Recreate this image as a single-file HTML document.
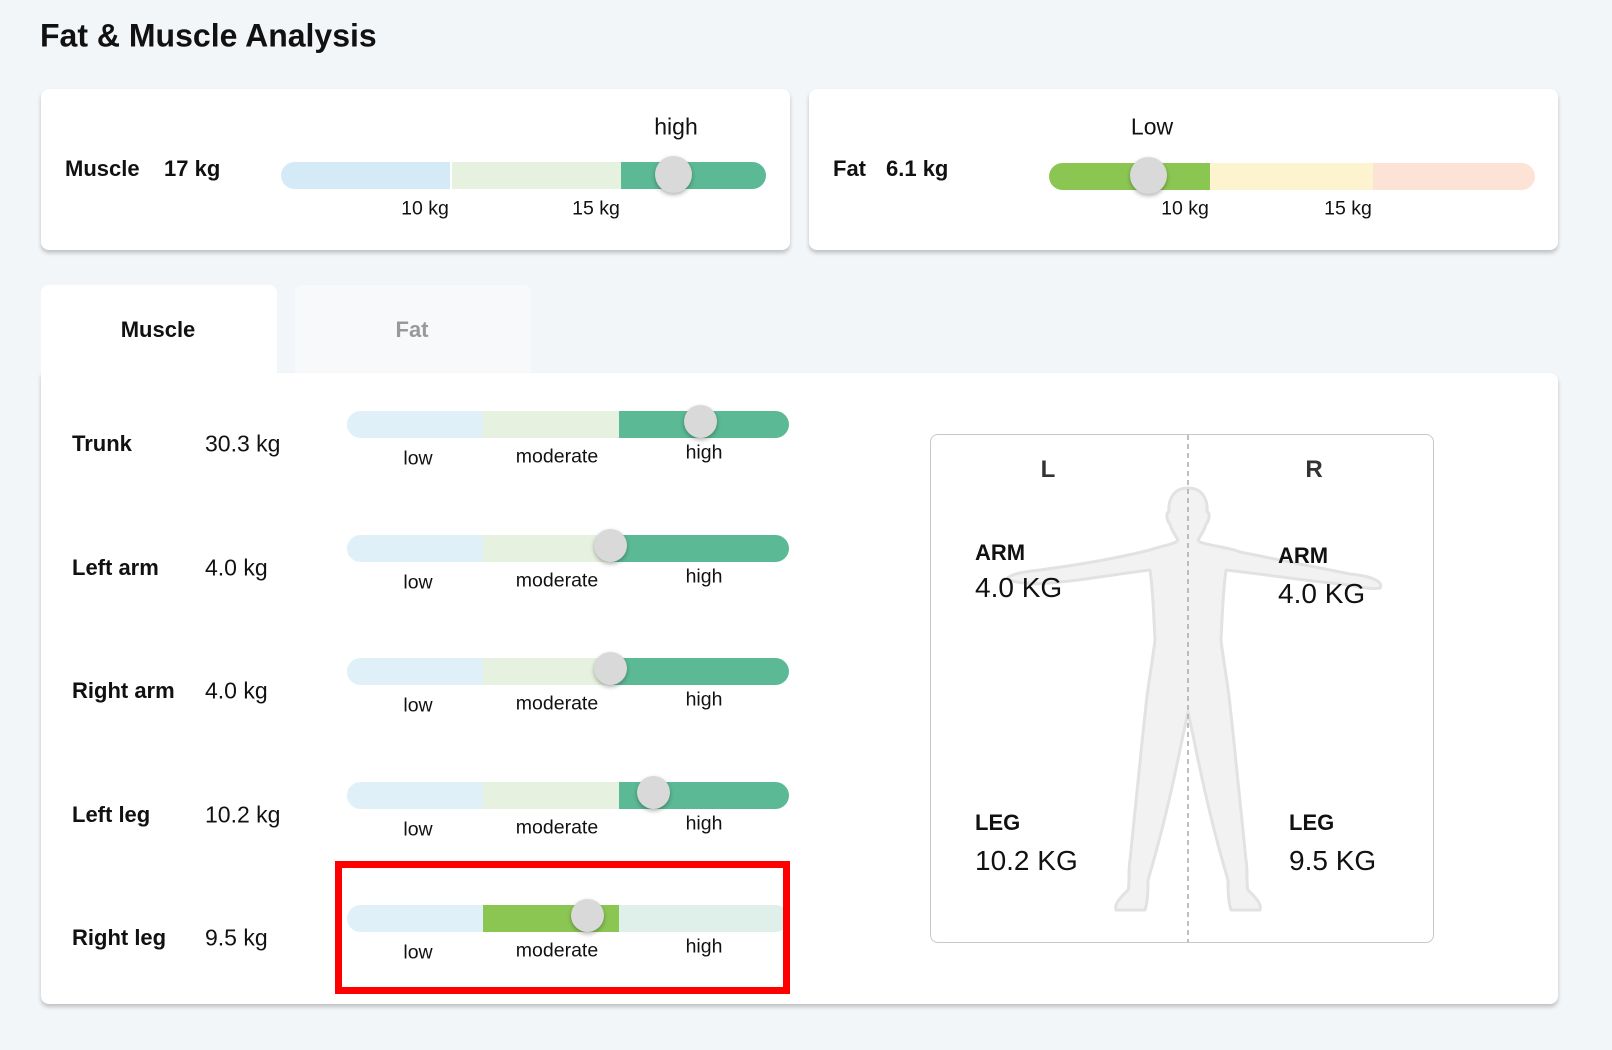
<!DOCTYPE html>
<html><head><meta charset="utf-8"><style>
*{margin:0;padding:0;box-sizing:border-box}
body{width:1612px;height:1050px;background:#f3f6f9;font-family:"Liberation Sans",Arial,sans-serif;color:#111;position:relative;overflow:hidden}
.a{position:absolute}
.card{position:absolute;background:#fff;border-radius:8px;box-shadow:0 3px 4px rgba(0,0,0,.22)}
.b{font-weight:bold}
.bar{position:absolute;height:27px;border-radius:14px;overflow:hidden;display:flex}
.bar div{height:100%}
.th{position:absolute;width:33px;height:33px;border-radius:50%;background:#d9d9d9;box-shadow:0 2px 4px rgba(0,0,0,.3)}
.lbl{position:absolute;font-size:19.5px;transform:translate(-50%,-50%);white-space:nowrap}
.t{position:absolute;transform:translateY(-50%);white-space:nowrap}
.v{font-size:23px}
</style></head><body>
<div class="t b" style="left:40px;top:36px;font-size:32px">Fat &amp; Muscle Analysis</div>

<div class="card" style="left:41px;top:89px;width:749px;height:161px"></div>
<div class="t b" style="left:65px;top:169px;font-size:22px">Muscle</div>
<div class="t b" style="left:164px;top:169px;font-size:22px">17 kg</div>
<div class="lbl" style="left:676px;top:127px;font-size:23px">high</div>
<div class="bar" style="left:281px;top:162px;width:485px"><div style="width:169px;background:#d4eaf7"></div><div style="width:2px;background:#fff"></div><div style="width:169px;background:#e6f2df"></div><div style="flex:1;background:#5bb995"></div></div>
<div class="th" style="left:655px;top:156px;width:37px;height:37px"></div>
<div class="lbl" style="left:425px;top:209px">10 kg</div>
<div class="lbl" style="left:596px;top:209px">15 kg</div>

<div class="card" style="left:809px;top:89px;width:749px;height:161px"></div>
<div class="t b" style="left:833px;top:169px;font-size:22px">Fat</div>
<div class="t b" style="left:886px;top:169px;font-size:22px">6.1 kg</div>
<div class="lbl" style="left:1152px;top:127px;font-size:23px">Low</div>
<div class="bar" style="left:1049px;top:163px;width:486px"><div style="width:161px;background:#8bc653"></div><div style="width:163px;background:#fdf3cf"></div><div style="flex:1;background:#fde3d5"></div></div>
<div class="th" style="left:1130px;top:157px;width:37px;height:37px"></div>
<div class="lbl" style="left:1185px;top:209px">10 kg</div>
<div class="lbl" style="left:1348px;top:209px">15 kg</div>

<div class="a" style="left:41px;top:285px;width:236px;height:95px;background:#fff;border-radius:8px 8px 0 0"></div>
<div class="a" style="left:295px;top:285px;width:236px;height:90px;background:#f8f9fb;border-radius:8px 8px 0 0"></div>
<div class="lbl b" style="left:158px;top:330px;font-size:22px">Muscle</div>
<div class="lbl b" style="left:412px;top:330px;font-size:22px;color:#999">Fat</div>
<div class="card" style="left:41px;top:373px;width:1517px;height:631px;border-radius:0 8px 8px 8px"></div>
<div class="a" style="left:41px;top:370px;width:236px;height:10px;background:#fff"></div>

<div class="t b" style="left:72px;top:444px;font-size:22px">Trunk</div><div class="t v" style="left:205px;top:444px">30.3 kg</div>
<div class="t b" style="left:72px;top:568px;font-size:22px">Left arm</div><div class="t v" style="left:205px;top:568px">4.0 kg</div>
<div class="t b" style="left:72px;top:691px;font-size:22px">Right arm</div><div class="t v" style="left:205px;top:691px">4.0 kg</div>
<div class="t b" style="left:72px;top:815px;font-size:22px">Left leg</div><div class="t v" style="left:205px;top:815px">10.2 kg</div>
<div class="t b" style="left:72px;top:938px;font-size:22px">Right leg</div><div class="t v" style="left:205px;top:938px">9.5 kg</div>

<div class="bar" style="left:347px;top:411px;width:442px"><div style="width:136px;background:#e0f0f8"></div><div style="width:136px;background:#e6f2df"></div><div style="flex:1;background:#5bb995"></div></div>
<div class="th" style="left:684px;top:405px"></div>
<div class="lbl" style="left:418px;top:459px">low</div><div class="lbl" style="left:557px;top:457px">moderate</div><div class="lbl" style="left:704px;top:453px">high</div>

<div class="bar" style="left:347px;top:535px;width:442px"><div style="width:136px;background:#e0f0f8"></div><div style="width:128px;background:#e6f2df"></div><div style="flex:1;background:#5bb995"></div></div>
<div class="th" style="left:594px;top:529px"></div>
<div class="lbl" style="left:418px;top:583px">low</div><div class="lbl" style="left:557px;top:581px">moderate</div><div class="lbl" style="left:704px;top:577px">high</div>

<div class="bar" style="left:347px;top:658px;width:442px"><div style="width:136px;background:#e0f0f8"></div><div style="width:128px;background:#e6f2df"></div><div style="flex:1;background:#5bb995"></div></div>
<div class="th" style="left:594px;top:652px"></div>
<div class="lbl" style="left:418px;top:706px">low</div><div class="lbl" style="left:557px;top:704px">moderate</div><div class="lbl" style="left:704px;top:700px">high</div>

<div class="bar" style="left:347px;top:782px;width:442px"><div style="width:136px;background:#e0f0f8"></div><div style="width:136px;background:#e6f2df"></div><div style="flex:1;background:#5bb995"></div></div>
<div class="th" style="left:637px;top:776px"></div>
<div class="lbl" style="left:418px;top:830px">low</div><div class="lbl" style="left:557px;top:828px">moderate</div><div class="lbl" style="left:704px;top:824px">high</div>

<div class="bar" style="left:347px;top:905px;width:442px"><div style="width:136px;background:#e0f0f8"></div><div style="width:136px;background:#8bc653"></div><div style="flex:1;background:#dff0ea"></div></div>
<div class="th" style="left:571px;top:899px"></div>
<div class="lbl" style="left:418px;top:953px">low</div><div class="lbl" style="left:557px;top:951px">moderate</div><div class="lbl" style="left:704px;top:947px">high</div>
<div class="a" style="left:335px;top:861px;width:455px;height:133px;border:7px solid #f00"></div>

<div class="a" style="left:930px;top:434px;width:504px;height:509px;border:1px solid #c8c8c8;border-radius:8px;background:#fff"></div>
<svg class="a" style="left:0;top:0" width="1612" height="1050" viewBox="0 0 1612 1050">
<g fill="#f2f2f2" stroke="#e2e2e2" stroke-width="3" stroke-linejoin="round">
<path d="M1188 488 C1172 488 1168 502 1169 512 C1166 512 1166 520 1170 524 C1172 532 1176 536 1178 540 L1176 542 C1168 546 1160 546 1150 550 C1110 560 1070 566 1040 570 C1020 572 1010 575 1008 578 C1010 582 1022 583 1036 584 C1075 582 1115 574 1150 570 C1153 590 1154 620 1155 640 C1152 665 1148 685 1146 705 C1140 760 1134 820 1130 860 C1128 872 1130 885 1128 890 C1120 898 1114 904 1116 910 L1145 910 C1148 900 1148 890 1148 880 C1160 840 1172 790 1182 740 L1188 712 L1194 740 C1204 790 1216 840 1228 880 C1228 890 1228 900 1231 910 L1260 910 C1262 904 1256 898 1248 890 C1246 885 1248 872 1246 860 C1242 820 1236 760 1230 705 C1228 685 1224 665 1221 640 C1222 620 1223 590 1226 570 C1262 574 1300 580 1340 584 C1354 585 1366 590 1380 588 C1384 582 1372 576 1350 574 C1320 568 1290 562 1240 552 C1228 547 1210 546 1200 542 L1198 540 C1200 536 1204 532 1206 524 C1210 520 1210 512 1207 512 C1208 502 1204 488 1188 488 Z"/>
</g>
<line x1="1188" y1="435" x2="1188" y2="942" stroke="#aaa" stroke-width="1.5" stroke-dasharray="5 4"/>
</svg>
<div class="lbl b" style="left:1048px;top:470px;font-size:24px;color:#333">L</div>
<div class="lbl b" style="left:1314px;top:470px;font-size:24px;color:#333">R</div>
<div class="t b" style="left:975px;top:553px;font-size:22px">ARM</div>
<div class="t" style="left:975px;top:588px;font-size:28px">4.0 KG</div>
<div class="t b" style="left:1278px;top:556px;font-size:22px">ARM</div>
<div class="t" style="left:1278px;top:594px;font-size:28px">4.0 KG</div>
<div class="t b" style="left:975px;top:823px;font-size:22px">LEG</div>
<div class="t" style="left:975px;top:861px;font-size:28px">10.2 KG</div>
<div class="t b" style="left:1289px;top:823px;font-size:22px">LEG</div>
<div class="t" style="left:1289px;top:861px;font-size:28px">9.5 KG</div>
</body></html>
